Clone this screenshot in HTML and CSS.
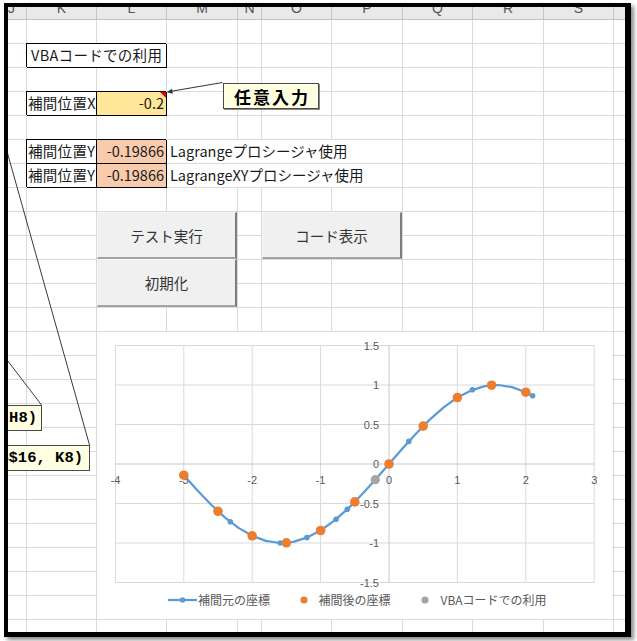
FILE: index.html
```html
<!DOCTYPE html>
<html lang="ja">
<head>
<meta charset="utf-8">
<title>Lagrange補間</title>
<link rel="stylesheet" href="styles.css">
</head>
<body>
<div class="frame">
  <div class="sheet">
    <div class="colhead">
      <div class="hc hc-j"><span>J</span></div>
      <div class="hc"><span>K</span></div>
      <div class="hc"><span>L</span></div>
      <div class="hc"><span>M</span></div>
      <div class="hc"><span>N</span></div>
      <div class="hc"><span>O</span></div>
      <div class="hc"><span>P</span></div>
      <div class="hc"><span>Q</span></div>
      <div class="hc"><span>R</span></div>
      <div class="hc"><span>S</span></div>
      <div class="hc"></div>
    </div>
    <div class="grid">
      <div class="cell boxed vba">VBAコードでの利用</div>
      <div class="cell boxed lbl r4">補間位置X</div>
      <div class="cell boxed num input r4">-0.2</div>
      <div class="cell boxed lbl r6">補間位置Y</div>
      <div class="cell boxed num result r6">-0.19866</div>
      <div class="cell note r6">Lagrangeプロシージャ使用</div>
      <div class="cell boxed lbl r7">補間位置Y</div>
      <div class="cell boxed num result r7">-0.19866</div>
      <div class="cell note r7">LagrangeXYプロシージャ使用</div>
    </div>

    <svg class="connectors" viewBox="8 7 617 625" width="617" height="625">
      <line x1="41.5" y1="405" x2="0" y2="350.7" stroke="#3a3a3a" stroke-width="1"/>
      <line x1="89.5" y1="445" x2="0" y2="126.5" stroke="#3a3a3a" stroke-width="1"/>
      <line x1="222.5" y1="82.5" x2="171" y2="91.3" stroke="#333" stroke-width="1"/>
      <polygon points="166.5,92.2 172.8,93.7 172,88.7" fill="#333"/>
    </svg>

    <div class="callout callout-input">任意入力</div>
    <div class="callout callout-h8">=Lagrange(H8)</div>
    <div class="callout callout-k8">=LagrangeXY($B$4:$B$16, K8)</div>

    <div class="btn btn-test">テスト実行</div>
    <div class="btn btn-init">初期化</div>
    <div class="btn btn-code">コード表示</div>

    <div class="chart">
      <svg viewBox="97 332 515 287" width="515" height="287">
        <g class="gridlines" stroke="#d9d9d9" stroke-width="1">
          <line x1="115.4" y1="345.5" x2="115.4" y2="582.5"/>
          <line x1="183.8" y1="345.5" x2="183.8" y2="582.5"/>
          <line x1="252.2" y1="345.5" x2="252.2" y2="582.5"/>
          <line x1="320.6" y1="345.5" x2="320.6" y2="582.5"/>
          <line x1="457.4" y1="345.5" x2="457.4" y2="582.5"/>
          <line x1="525.8" y1="345.5" x2="525.8" y2="582.5"/>
          <line x1="594.2" y1="345.5" x2="594.2" y2="582.5"/>
          <line x1="115.4" y1="345.5" x2="594.2" y2="345.5"/>
          <line x1="115.4" y1="385" x2="594.2" y2="385"/>
          <line x1="115.4" y1="424.5" x2="594.2" y2="424.5"/>
          <line x1="115.4" y1="503.5" x2="594.2" y2="503.5"/>
          <line x1="115.4" y1="543" x2="594.2" y2="543"/>
          <line x1="115.4" y1="582.5" x2="594.2" y2="582.5"/>
        </g>
        <g stroke="#c8c8c8" stroke-width="1">
          <line x1="389" y1="345.5" x2="389" y2="582.5"/>
          <line x1="115.4" y1="464" x2="594.2" y2="464"/>
        </g>
        <g class="ticks" text-anchor="middle">
          <text x="115.4" y="484">-4</text>
          <text x="183.8" y="484">-3</text>
          <text x="252.2" y="484">-2</text>
          <text x="320.6" y="484">-1</text>
          <text x="389" y="484">0</text>
          <text x="457.4" y="484">1</text>
          <text x="525.8" y="484">2</text>
          <text x="594.2" y="484">3</text>
        </g>
        <g class="ticks" text-anchor="end">
          <text x="379" y="349.5">1.5</text>
          <text x="379" y="389">1</text>
          <text x="379" y="428.5">0.5</text>
          <text x="379" y="468">0</text>
          <text x="379" y="507.5">-0.5</text>
          <text x="379" y="547">-1</text>
          <text x="379" y="586.5">-1.5</text>
        </g>
        <polyline fill="none" stroke="#5b9bd5" stroke-width="2.25" stroke-linejoin="round" stroke-linecap="round"
          points="183.8,475.2 197.5,490.5 211.2,504.7 224.8,517.4 238.5,527.9 252.2,535.8 265.9,540.9 279.6,543 293.2,541.8 306.9,537.6 320.6,530.5 334.3,520.7 348,508.6 361.6,494.8 375.3,479.7 389,464 402.7,448.3 416.4,433.2 430,419.4 443.7,407.3 457.4,397.5 471.1,390.4 484.8,386.2 498.4,385 512.1,387.1 525.8,392.2 532.6,395.8"/>
        <g fill="#5b9bd5">
          <circle cx="183.8" cy="475.2" r="2.8"/>
          <circle cx="230.3" cy="521.8" r="2.8"/>
          <circle cx="280.2" cy="543" r="2.8"/>
          <circle cx="306.9" cy="537.6" r="2.8"/>
          <circle cx="336" cy="519.3" r="2.8"/>
          <circle cx="347.3" cy="509.3" r="2.8"/>
          <circle cx="408.8" cy="441.4" r="2.8"/>
          <circle cx="472.4" cy="389.8" r="2.8"/>
          <circle cx="532.6" cy="395.8" r="2.8"/>
        </g>
        <g fill="#ed7d31">
          <circle cx="183.8" cy="475.2" r="4.8"/>
          <circle cx="218" cy="511.3" r="4.8"/>
          <circle cx="252.2" cy="535.8" r="4.8"/>
          <circle cx="286.4" cy="542.8" r="4.8"/>
          <circle cx="320.6" cy="530.5" r="4.8"/>
          <circle cx="354.8" cy="501.9" r="4.8"/>
          <circle cx="389" cy="464" r="4.8"/>
          <circle cx="423.2" cy="426.1" r="4.8"/>
          <circle cx="457.4" cy="397.5" r="4.8"/>
          <circle cx="491.6" cy="385.2" r="4.8"/>
          <circle cx="525.8" cy="392.2" r="4.8"/>
        </g>
        <circle cx="375.3" cy="479.7" r="4.6" fill="#a5a5a5"/>
        <g class="legend">
          <line x1="168" y1="600" x2="197" y2="600" stroke="#5b9bd5" stroke-width="2.25"/>
          <circle cx="182.5" cy="600" r="2.8" fill="#5b9bd5"/>
          <text x="198" y="604.5">補間元の座標</text>
          <circle cx="304" cy="600" r="3.6" fill="#ed7d31"/>
          <text x="318.5" y="604.5">補間後の座標</text>
          <circle cx="425" cy="600" r="3.6" fill="#a5a5a5"/>
          <text x="440.5" y="604.5">VBAコードでの利用</text>
        </g>
      </svg>
    </div>
  </div>
</div>
</body>
</html>
```

FILE: styles.css
```css
* { box-sizing: border-box; }

html, body {
  margin: 0;
  padding: 0;
  background: #ffffff;
}

body {
  width: 637px;
  height: 641px;
  overflow: hidden;
  font-family: "Noto Sans CJK JP", "Liberation Sans", sans-serif;
}

.frame {
  margin: 3px 0 0 4px;
  width: 627px;
  height: 634px;
  border-style: solid;
  border-color: #000;
  border-width: 4px 6px 5px 4px;
  box-shadow: 3px 3px 4px rgba(0, 0, 0, 0.45);
}

.sheet {
  --cols: 19px 70px 70px 71px 24px 70px 71px 70px 71px 70px 11px;
  --line: #dadada;
  position: relative;
  width: 617px;
  height: 625px;
  overflow: hidden;
  background: #fff;
}

/* column header row */
.colhead {
  display: grid;
  grid-template-columns: var(--cols);
  height: 13px;
  border-bottom: 1px solid #c2c2c2;
  background-color: #e9e9e9;
}

.hc {
  display: flex;
  justify-content: center;
  overflow: hidden;
  border-right: 1px solid #c6c6c6;
  font-family: "Liberation Sans", sans-serif;
  font-size: 14px;
  line-height: 14px;
  color: #555;
}

.hc span {
  display: block;
  margin-top: -6px;
}

.hc-j {
  justify-content: flex-start;
}

.hc:last-child {
  border-right: none;
}

/* cell grid */
.grid {
  display: grid;
  grid-template-columns: var(--cols);
  grid-template-rows: repeat(25, 24px) 12px;
  height: 612px;
  background-image:
    linear-gradient(to right,
      transparent 18px, var(--line) 18px 19px,
      transparent 19px 88px, var(--line) 88px 89px,
      transparent 89px 158px, var(--line) 158px 159px,
      transparent 159px 229px, var(--line) 229px 230px,
      transparent 230px 253px, var(--line) 253px 254px,
      transparent 254px 323px, var(--line) 323px 324px,
      transparent 324px 394px, var(--line) 394px 395px,
      transparent 395px 464px, var(--line) 464px 465px,
      transparent 465px 535px, var(--line) 535px 536px,
      transparent 536px 605px, var(--line) 605px 606px,
      transparent 606px),
    repeating-linear-gradient(to bottom,
      transparent 0 23px, var(--line) 23px 24px);
}

.cell {
  display: flex;
  align-items: center;
  font-size: 14.5px;
  line-height: 1;
  color: #1a1a1a;
  white-space: nowrap;
}

.boxed {
  position: relative;
  background: #fff;
  border-right: 1px solid #000;
  border-bottom: 1px solid #000;
  box-shadow: -1px -1px 0 #000;
}

.vba {
  grid-column: 2 / span 2;
  grid-row: 2;
  padding-left: 4px;
  letter-spacing: 0.3px;
}

.r4 { grid-row: 4; }
.r6 { grid-row: 6; }
.r7 { grid-row: 7; }

.lbl {
  grid-column: 2;
  padding-left: 1px;
  letter-spacing: 0.3px;
}

.num {
  grid-column: 3;
  justify-content: flex-end;
  padding-right: 2px;
}

.input {
  background: #ffe699;
}

.input::after {
  content: "";
  position: absolute;
  top: 0;
  right: 0;
  border-left: 6px solid transparent;
  border-top: 6px solid #e00000;
}

.result {
  background: #f8cbad;
}

.note {
  grid-column: 4 / span 4;
  padding-left: 3px;
  background: #fff;
  border-right: 1px solid var(--line);
  border-bottom: 1px solid var(--line);
}

/* connector lines overlay */
.connectors {
  position: absolute;
  left: 0;
  top: 0;
  pointer-events: none;
  z-index: 2;
}

/* text box callouts */
.callout {
  position: absolute;
  z-index: 3;
  display: flex;
  align-items: center;
  height: 26px;
  background: #ffffe1;
  border: 1px solid #4a4a4a;
  white-space: nowrap;
  overflow: hidden;
  color: #000;
}

.callout-input {
  left: 215px;
  top: 76px;
  width: 96px;
  justify-content: center;
  font-weight: 700;
  font-size: 17px;
  letter-spacing: 2px;
  padding-left: 2px;
  box-shadow: 1px 1px 0 #8a8a8a;
}

.callout-h8,
.callout-k8 {
  justify-content: flex-end;
  font-family: "Liberation Mono", monospace;
  font-weight: 700;
  font-size: 15.5px;
}

.callout-h8 {
  left: -80px;
  top: 398px;
  width: 114px;
  padding-right: 4px;
}

.callout-k8 {
  left: -220px;
  top: 438px;
  width: 302px;
  padding-right: 6px;
}

/* form buttons */
.btn {
  position: absolute;
  z-index: 1;
  display: flex;
  align-items: center;
  justify-content: center;
  background: #f0f0f0;
  border-top: 1px solid #f7f7f7;
  border-left: 1px solid #f7f7f7;
  border-right: 2px solid #7d7d7d;
  border-bottom: 2px solid #a3a3a3;
  font-size: 14.5px;
  color: #333;
}

.btn-test {
  left: 89px;
  top: 205px;
  width: 140px;
  height: 47px;
}

.btn-init {
  left: 89px;
  top: 252px;
  width: 140px;
  height: 48px;
}

.btn-code {
  left: 254px;
  top: 205px;
  width: 140px;
  height: 47px;
}

/* chart object */
.chart {
  position: absolute;
  z-index: 1;
  left: 89px;
  top: 325px;
  width: 515px;
  height: 287px;
  background: #fff;
}

.chart svg {
  display: block;
}

.ticks text {
  font-family: "Liberation Sans", sans-serif;
  font-size: 11px;
  fill: #595959;
}

.legend text {
  font-family: "Noto Sans CJK JP", sans-serif;
  font-size: 12px;
  fill: #595959;
}
```
